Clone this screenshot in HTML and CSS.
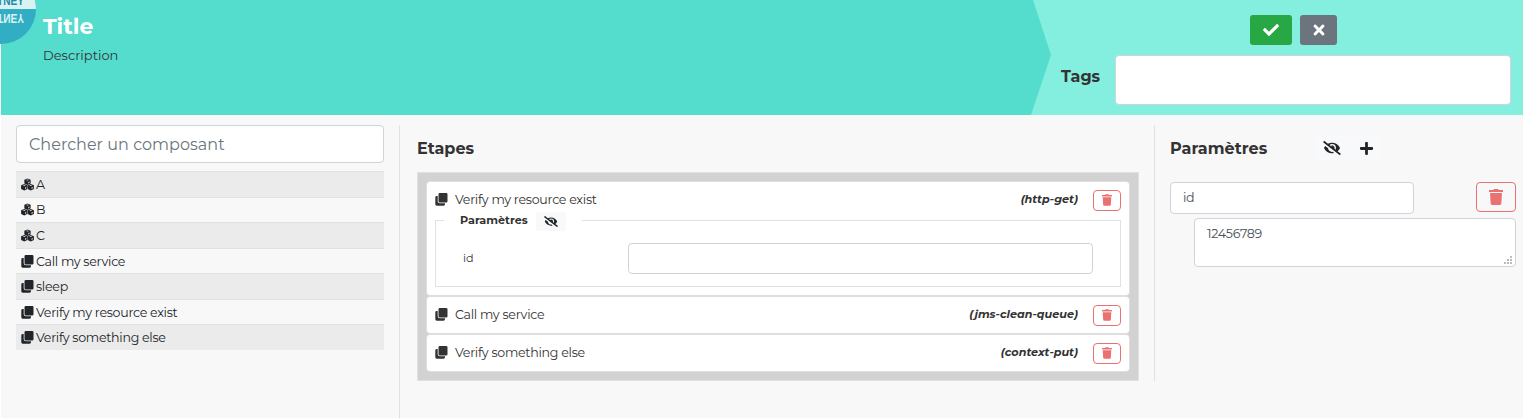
FILE: index.html
```html
<!DOCTYPE html>
<html lang="fr">
<head>
<meta charset="utf-8">
<title>Composants</title>
<link rel="stylesheet" href="styles.css">
</head>
<body>
<svg class="defs" aria-hidden="true">
  <symbol id="check" viewBox="0 0 512 512"><path d="M173.898 439.404l-166.4-166.4c-9.997-9.997-9.997-26.206 0-36.204l36.203-36.204c9.997-9.998 26.207-9.998 36.204 0L192 312.69 432.095 72.596c9.997-9.997 26.207-9.997 36.204 0l36.203 36.204c9.997 9.997 9.997 26.206 0 36.204l-294.4 294.401c-9.998 9.997-26.207 9.997-36.204-.001z"/></symbol>
  <symbol id="times" viewBox="0 0 352 512"><path d="M242.72 256l100.07-100.07c12.28-12.28 12.28-32.19 0-44.48l-22.24-22.24c-12.28-12.28-32.19-12.28-44.48 0L176 189.28 75.93 89.21c-12.28-12.28-32.19-12.28-44.48 0L9.21 111.45c-12.28 12.28-12.28 32.19 0 44.48L109.28 256 9.21 356.07c-12.28 12.28-12.28 32.19 0 44.48l22.24 22.24c12.28 12.28 32.2 12.28 44.48 0L176 322.72l100.07 100.07c12.28 12.28 32.2 12.28 44.48 0l22.24-22.24c12.28-12.28 12.28-32.19 0-44.48L242.72 256z"/></symbol>
  <symbol id="plus" viewBox="0 0 448 512"><path d="M416 208H272V64c0-17.67-14.33-32-32-32h-32c-17.67 0-32 14.33-32 32v144H32c-17.67 0-32 14.33-32 32v32c0 17.67 14.33 32 32 32h144v144c0 17.67 14.33 32 32 32h32c17.67 0 32-14.33 32-32V304h144c17.67 0 32-14.33 32-32v-32c0-17.67-14.33-32-32-32z"/></symbol>
  <symbol id="trash" viewBox="0 0 448 512"><path d="M432 32H312l-9.4-18.7A24 24 0 0 0 281.1 0H166.8a23.72 23.72 0 0 0-21.4 13.3L136 32H16A16 16 0 0 0 0 48v32a16 16 0 0 0 16 16h416a16 16 0 0 0 16-16V48a16 16 0 0 0-16-16zM53.2 467a48 48 0 0 0 47.9 45h245.8a48 48 0 0 0 47.9-45L416 128H32z"/></symbol>
  <symbol id="clone" viewBox="0 0 13 13"><path d="M4.800 0h6.400a1.300 1.300 0 0 1 1.300 1.300v6.900a1.300 1.300 0 0 1-1.300 1.300H4.800a1.300 1.300 0 0 1-1.300-1.300V1.300A1.300 1.300 0 0 1 4.800 0zM2.700 3H1.700A1.400 1.400 0 0 0 .3 4.400v6.900a1.400 1.400 0 0 0 1.400 1.400h6.900a1.400 1.400 0 0 0 1.400-1.400v-1H4.800a2.100 2.100 0 0 1-2.100-2.100z"/></symbol>
  <symbol id="eye-slash" viewBox="0 0 640 512"><path d="M320 400c-75.85 0-137.25-58.71-142.9-133.11L72.2 185.82c-13.79 17.3-26.48 35.59-36.72 55.59a32.35 32.35 0 0 0 0 29.19C89.71 376.41 197.07 448 320 448c26.91 0 52.87-4 77.89-10.46L346 397.39a144.13 144.13 0 0 1-26 2.61zm313.82 58.1l-110.55-85.44a331.25 331.25 0 0 0 81.25-102.07 32.35 32.35 0 0 0 0-29.19C550.29 135.59 442.93 64 320 64a308.15 308.15 0 0 0-147.32 37.7L45.46 3.37A16 16 0 0 0 23 6.18L3.37 31.45A16 16 0 0 0 6.18 53.9l588.36 454.73a16 16 0 0 0 22.46-2.81l19.64-25.27a16 16 0 0 0-2.82-22.45zm-183.72-142l-39.3-30.38A94.75 94.75 0 0 0 416 256a94.76 94.76 0 0 0-121.31-92.21A47.65 47.65 0 0 1 304 192a46.64 46.64 0 0 1-1.54 10l-73.61-56.89A142.31 142.31 0 0 1 320 112a143.92 143.92 0 0 1 144 144c0 21.63-5.29 41.79-13.9 60.11z"/></symbol>
  <symbol id="cubes" viewBox="0 0 26 24">
    <g id="cube"><path d="M13 0l6.300 2.500v7.500L13 12.800 6.700 10V2.500z"/><path class="edge" d="M10 3L13 1.900 16 3 13 4.100zM14.600 9.800V7l2.300-1v2.700z"/></g>
    <use href="#cube" x="-6.500" y="11"/><use href="#cube" x="6.500" y="11"/>
  </symbol>
</svg>

<header class="banner">
  <div class="intro">
    <h1 class="title">Title</h1>
    <p class="description">Description</p>
  </div>
  <div class="meta">
    <div class="actions">
      <button class="btn save"><svg class="i16"><use href="#check"/></svg></button>
      <button class="btn cancel"><svg class="i11"><use href="#times"/></svg></button>
    </div>
    <div class="tags"><label class="tags-label">Tags</label><div class="tags-box"></div></div>
  </div>
  <svg class="logo" width="36" height="45" viewBox="0 0 36 45">
    <circle cx="1" cy="9" r="35" fill="#31adc4"/>
    <path d="M0 0h34.800a35 35 0 0 1 1.200 9H0z" fill="#d9f3f4"/>
    <text class="logo-text top" x="-3" y="5" textLength="27" lengthAdjust="spacingAndGlyphs">TNEY</text>
    <text class="logo-text flip" x="-3" y="-14" textLength="27" lengthAdjust="spacingAndGlyphs" transform="scale(1 -1)">TNEY</text>
  </svg>
</header>

<main class="page">
  <aside class="palette">
    <input class="search" placeholder="Chercher un composant">
    <ul class="list">
      <li class="row"><svg><use href="#cubes"/></svg><span>A</span></li>
      <li class="row"><svg><use href="#cubes"/></svg><span>B</span></li>
      <li class="row"><svg><use href="#cubes"/></svg><span>C</span></li>
      <li class="row"><svg><use href="#clone"/></svg><span>Call my service</span></li>
      <li class="row"><svg><use href="#clone"/></svg><span>sleep</span></li>
      <li class="row"><svg><use href="#clone"/></svg><span>Verify my resource exist</span></li>
      <li class="row"><svg><use href="#clone"/></svg><span>Verify something else</span></li>
    </ul>
  </aside>

  <section class="steps">
    <h2 class="heading">Etapes</h2>
    <div class="board">
      <article class="card open">
        <div class="card-head"><svg><use href="#clone"/></svg><span class="name">Verify my resource exist</span><em class="kind">(http-get)</em><button class="btn del"><svg><use href="#trash"/></svg></button></div>
        <fieldset class="params">
          <legend class="legend"><span>Paramètres</span><button class="btn light small"><svg><use href="#eye-slash"/></svg></button></legend>
          <div class="param"><label class="param-name">id</label><input class="param-input"></div>
        </fieldset>
      </article>
      <article class="card">
        <div class="card-head"><svg><use href="#clone"/></svg><span class="name">Call my service</span><em class="kind">(jms-clean-queue)</em><button class="btn del"><svg><use href="#trash"/></svg></button></div>
      </article>
      <article class="card">
        <div class="card-head"><svg><use href="#clone"/></svg><span class="name">Verify something else</span><em class="kind">(context-put)</em><button class="btn del"><svg><use href="#trash"/></svg></button></div>
      </article>
    </div>
  </section>

  <section class="settings">
    <div class="settings-head">
      <h2 class="heading">Paramètres</h2>
      <button class="btn light eye"><svg><use href="#eye-slash"/></svg></button>
      <button class="btn light add"><svg><use href="#plus"/></svg></button>
    </div>
    <div class="setting"><input class="key" value="id"><button class="btn del large"><svg><use href="#trash"/></svg></button></div>
    <div class="value"><span>12456789</span><svg class="grip" width="8" height="8"><path d="M6 0h2v2H6zM3 3h2v2H3zM6 3h2v2H6zM0 6h2v2H0zM3 6h2v2H3zM6 6h2v2H6z"/></svg></div>
  </section>
</main>
</body>
</html>
```

FILE: styles.css
```css
* { box-sizing: border-box; }
body { margin: 0; padding-left: 1px; height: 418px; overflow: hidden; background: #fff; color: #333; font-family: Montserrat, Inter, "Open Sans", sans-serif; font-size: 12.6px; }
button, input { font: inherit; }
svg { display: block; flex: none; fill: currentColor; }
.defs { position: absolute; width: 0; height: 0; }
h1, h2, p, ul, fieldset { margin: 0; padding: 0; }
.edge { fill: #eee; }

.banner { position: relative; display: flex; height: 115px; background: #85efdf; }
.intro { width: 1050px; padding: 13px 0 0 42px; background: #54dccd; clip-path: polygon(0 0, 1032px 0, 1050px 55px, 1030px 100%, 0 100%); }
.title { color: #fff; font-size: 22px; line-height: 28px; font-weight: 700; }
.description { margin-top: 5px; font-size: 13px; line-height: 18px; }
.meta { flex: 1; padding: 15px 12px 0 10px; }
.actions { display: flex; gap: 8px; padding-left: 189px; }
.btn { display: flex; align-items: center; justify-content: center; flex: none; padding: 0; border: 0; border-radius: 3px; }
.save { width: 42px; height: 30px; color: #fff; background: #28a745; }
.cancel { width: 37px; height: 30px; color: #fff; background: #6c757d; }
.i16 { width: 16px; height: 16px; }
.i11 { width: 12px; height: 16px; }
.tags { display: flex; margin-top: 10px; }
.tags-label { width: 54px; padding-top: 11px; font-size: 16px; line-height: 22px; font-weight: 700; }
.tags-box { flex: 1; height: 50px; background: #fff; border: 1px solid #ced4da; border-radius: 4px; }
.logo { position: absolute; left: -1px; top: 0; overflow: hidden; }
.logo-text { font: 700 12.5px "Liberation Sans", sans-serif; }
.top { fill: #238ba2; }
.flip { fill: #d9f3f4; }

.page { display: flex; height: 303px; padding-top: 10px; background: #f8f8f8; }
.palette { width: 399px; padding: 0 15px; border-right: 1px solid #dee2e6; }
.search { display: block; width: 368px; height: 38px; padding: 0 12px; background: #fff; border: 1px solid #ced4da; border-radius: 4px; font-size: 16px; letter-spacing: .03px; }
.search::placeholder { color: #6c757d; opacity: 1; }
.list { margin-top: 8px; list-style: none; color: #212529; }
.row { display: flex; align-items: center; gap: 2px; height: 25.57px; padding: .3px 0 0 5px; border-top: 1px solid #dee2e6; letter-spacing: -.28px; }
.row:nth-child(odd) { background: #ebebeb; }
.row svg { width: 13px; height: 13px; }

.steps { width: 755px; padding: 0 16px 0 17px; height: 256px; border-right: 1px solid #dee2e6; }
.heading { padding-top: 13px; font-size: 16px; line-height: 22px; font-weight: 700; letter-spacing: .05px; }
.board { margin-top: 12px; width: 722px; height: 209px; padding: 8px; background: #d2d2d2; border: 1px solid #dee2e6; }
.card { height: 38px; padding: 0 8px; background: #fff; border: 1px solid #dedede; border-radius: 4px; }
.card.open { height: 115px; }
.card-head { display: flex; align-items: center; height: 36px; }
.card-head > svg { width: 13px; height: 13px; margin-top: -1px; }
.name { margin: -1px 0 0 7px; letter-spacing: -.27px; }
.kind { margin: -2px 15px 0 auto; font-size: 11.2px; font-weight: 700; }
.del { width: 28px; height: 21px; background: transparent; border: 1px solid #ea7172; border-radius: 4px; color: #ea7172; }
.del svg { width: 10px; height: 12px; }
.params { height: 76px; margin-top: -7px; border: 1px solid #dee2e6; }
.legend { display: flex; align-items: center; width: 138px; height: 19px; margin-left: 8px; padding-left: 16px; font-size: 11.2px; font-weight: 700; }
.legend span { width: 69px; margin-top: -2px; }
.light { background: #f8f9fa; color: #212529; }
.small { width: 30px; height: 19px; margin: 2px 0 0 7px; }
.small svg { width: 14px; height: 11px; }
.param { display: flex; align-items: center; padding: 13px 27px 0; }
.param-name { width: 165px; margin-top: -2px; font-size: 11.2px; }
.param-input { width: 465px; height: 31px; border: 1px solid #ced4da; border-radius: 4px; }

.settings { flex: 1; padding: 0 7px 0 15px; }
.settings-head { display: flex; height: 57px; }
.settings-head .heading { width: 145px; }
.eye { width: 33px; height: 28px; margin-top: 9px; }
.eye svg { width: 18px; height: 14px; }
.add { width: 31px; height: 28px; margin: 9px 0 0 3px; }
.add svg { width: 13px; height: 15px; }
.setting { display: flex; justify-content: space-between; }
.key { width: 244px; height: 32px; padding: 0 12px 1px; color: #495057; background: #fff; border: 1px solid #ced4da; border-radius: 4px; letter-spacing: -.3px; }
.large { width: 40px; height: 30px; }
.large svg { width: 14px; height: 16px; }
.value { display: flex; justify-content: space-between; height: 49px; margin: 4px 0 0 24px; padding: 7px 3px 2px 12px; color: #495057; background: #fff; border: 1px solid #ced4da; border-radius: 4px; letter-spacing: -.3px; }
.grip { align-self: flex-end; fill: #bbb; }
```
